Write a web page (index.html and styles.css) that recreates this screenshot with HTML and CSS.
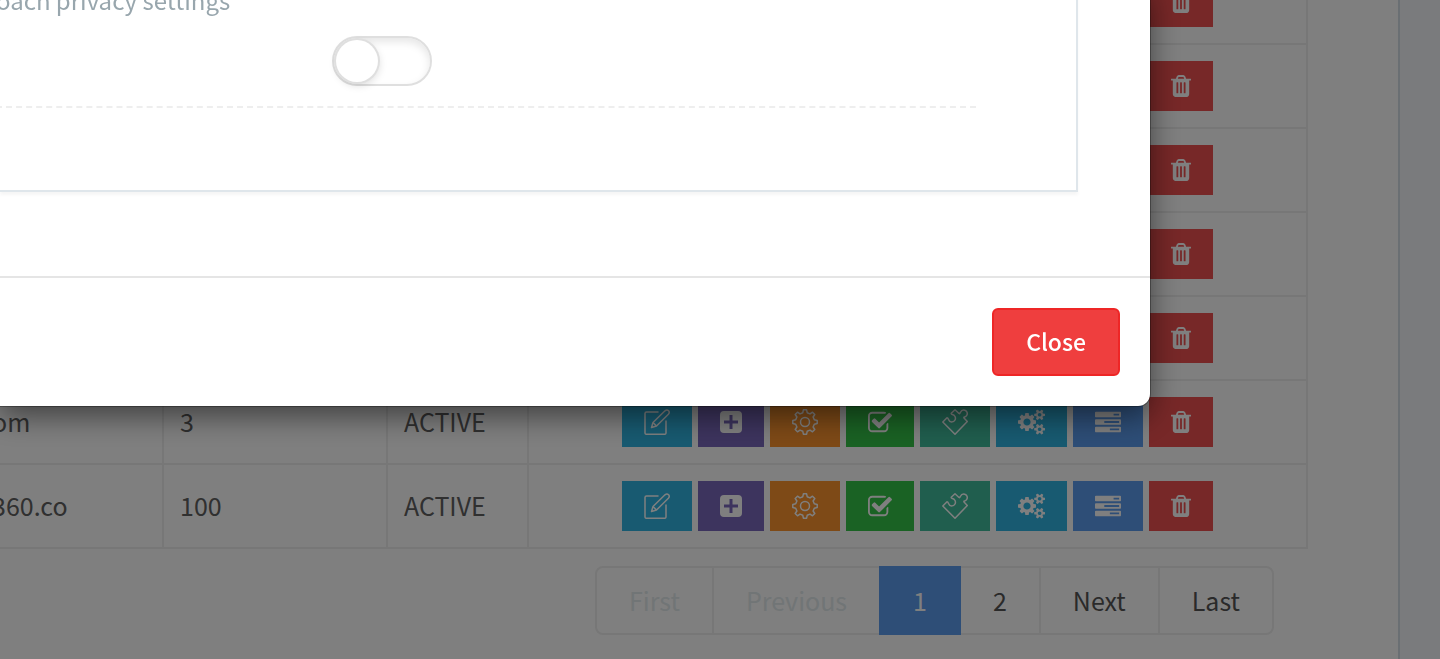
FILE: index.html
```html
<!DOCTYPE html>
<html lang="en">
<head>
  <meta charset="UTF-8">
  <title>Coaches</title>
  <link rel="stylesheet" href="styles.css">
</head>
<body>
  <!-- Icons used in the action buttons -->
  <svg class="hidden">
    <symbol id="edit" viewBox="0 0 26 26">
      <path class="line" d="M14 3H2.500Q1 3 1 4.500V24Q1 25.300 2.500 25.300H20.500Q22 25.300 22 24V12M7.500 18.500L9 13.500L21 1.800Q23 .300 24.600 1.800Q26 3.400 24.400 5.200L12.500 17ZM9 13.500L12.500 17"/>
    </symbol>
    <symbol id="plus" viewBox="0 0 22 22">
      <path d="M4 0H18Q22 0 22 4V18Q22 22 18 22H4Q0 22 0 18V4Q0 0 4 0ZM9.500 4V9.500H4V12.500H9.500V18H12.500V12.500H18V9.500H12.500V4Z"/>
    </symbol>
    <symbol id="gear" viewBox="-13 -13 26 26">
      <path class="line" d="M-2.200-9.300L-1.600-12.200H1.600L2.200-9.300L5-8.100L7.500-9.800L9.800-7.500L8.100-5L9.300-2.200L12.200-1.600V1.600L9.300 2.200L8.100 5L9.800 7.500L7.500 9.800L5 8.100L2.200 9.300L1.600 12.200H-1.600L-2.200 9.300L-5 8.100L-7.500 9.800L-9.800 7.500L-8.100 5L-9.300 2.200L-12.200 1.600V-1.600L-9.300-2.200L-8.100-5L-9.800-7.500L-7.500-9.800L-5-8.100Z"/>
      <circle class="line" r="4.500"/>
    </symbol>
    <symbol id="check" viewBox="64 128 1664 1408">
      <path d="M1472 930v318q0 119-84.500 203.500t-203.500 84.500h-832q-119 0-203.500-84.500t-84.500-203.500v-832q0-119 84.500-203.500t203.500-84.500h832q63 0 117 25 15 7 18 23 3 17-9 29l-49 49q-10 10-23 10-3 0-9-2-23-6-45-6h-832q-66 0-113 47t-47 113v832q0 66 47 113t113 47h832q66 0 113-47t47-113v-254q0-13 9-22l64-64q10-10 23-10 6 0 12 3 20 8 20 29zm231-489l-814 814q-24 24-57 24t-57-24l-430-430q-24-24-24-57t24-57l110-110q24-24 57-24t57 24l263 263 647-647q24-24 57-24t57 24l110 110q24 24 24 57t-24 57z"/>
    </symbol>
    <symbol id="puzzle" viewBox="0 0 26 26">
      <path class="line" d="M.8 13L5 8.800C7 8.800 6 13 9.500 13C13 13 14.300 9.500 12.800 7.200C11.500 5 9 5.800 9.200 4.300L13 .8L17 4.500C18.500 5.500 18 1 21.500 1C25 1 26.500 5 24 7.200C22.500 8.500 21.500 7.700 22 9L25.300 12.500L13 25.300Z"/>
    </symbol>
    <symbol id="cogs" viewBox="0 -128 1920 1792">
      <path d="M896 768q0-106-75-181t-181-75-181 75-75 181 75 181 181 75 181-75 75-181zm768 512q0-52-38-90t-90-38-90 38-38 90q0 53 37.500 90.500t90.500 37.500 90.500-37.500 37.500-90.500zm0-1024q0-52-38-90t-90-38-90 38-38 90q0 53 37.500 90.500t90.500 37.500 90.500-37.500 37.500-90.500zm-384 421v185q0 10-7 19.500t-16 10.500l-155 24q-11 35-32 76 34 48 90 115 7 11 7 20 0 12-7 19-23 30-82.500 89.500t-78.500 59.500q-11 0-21-7l-115-90q-37 19-77 31-11 108-23 155-7 24-30 24h-186q-11 0-20-7.500t-10-17.500l-23-153q-34-10-75-31l-118 89q-7 7-20 7-11 0-21-8-144-133-144-160 0-9 7-19 10-14 41-53t47-61q-23-44-35-82l-152-24q-10-1-17-9.500t-7-19.500v-185q0-10 7-19.500t16-10.500l155-24q11-35 32-76-34-48-90-115-7-11-7-20 0-12 7-20 22-30 82-89t79-59q11 0 21 7l115 90q34-18 77-32 11-108 23-154 7-24 30-24h186q11 0 20 7.500t10 17.500l23 153q34 10 75 31l118-89q8-7 20-7 11 0 21 8 144 133 144 160 0 8-7 19-12 16-42 54t-45 60q23 48 34 82l152 23q10 2 17 10.500t7 19.500zm640 533v140q0 16-149 31-12 27-30 52 51 113 51 138 0 4-4 7-122 71-124 71-8 0-46-47t-52-68q-20 2-30 2t-30-2q-14 21-52 68t-46 47q-2 0-124-71-4-3-4-7 0-25 51-138-18-25-30-52-149-15-149-31v-140q0-16 149-31 13-29 30-52-51-113-51-138 0-4 4-7 4-2 35-20t59-34 30-16q8 0 46 46.500t52 67.500q20-2 30-2t30 2q51-71 92-112l6-2q4 0 124 70 4 3 4 7 0 25-51 138 17 23 30 52 149 15 149 31zm0-1024v140q0 16-149 31-12 27-30 52 51 113 51 138 0 4-4 7-122 71-124 71-8 0-46-47t-52-68q-20 2-30 2t-30-2q-14 21-52 68t-46 47q-2 0-124-71-4-3-4-7 0-25 51-138-18-25-30-52-149-15-149-31v-140q0-16 149-31 13-29 30-52-51-113-51-138 0-4 4-7 4-2 35-20t59-34 30-16q8 0 46 46.500t52 67.500q20-2 30-2t30 2q51-71 92-112l6-2q4 0 124 70 4 3 4 7 0 25-51 138 17 23 30 52 149 15 149 31z"/>
    </symbol>
    <symbol id="tasks" viewBox="0 128 1792 1408">
      <path d="M1024 1408h640v-128h-640v128zm-384-512h1024v-128h-1024v128zm640-512h384v-128h-384v128zm512 832v256q0 26-19 45t-45 19h-1664q-26 0-45-19t-19-45v-256q0-26 19-45t45-19h1664q26 0 45 19t19 45zm0-512v256q0 26-19 45t-45 19h-1664q-26 0-45-19t-19-45v-256q0-26 19-45t45-19h1664q26 0 45 19t19 45zm0-512v256q0 26-19 45t-45 19h-1664q-26 0-45-19t-19-45v-256q0-26 19-45t45-19h1664q26 0 45 19t19 45z"/>
    </symbol>
    <symbol id="trash" viewBox="192 128 1408 1536">
      <path d="M704 1376v-704q0-14-9-23t-23-9h-64q-14 0-23 9t-9 23v704q0 14 9 23t23 9h64q14 0 23-9t9-23zm256 0v-704q0-14-9-23t-23-9h-64q-14 0-23 9t-9 23v704q0 14 9 23t23 9h64q14 0 23-9t9-23zm256 0v-704q0-14-9-23t-23-9h-64q-14 0-23 9t-9 23v704q0 14 9 23t23 9h64q14 0 23-9t9-23zm-544-992h448l-48-117q-7-9-17-11h-317q-10 2-17 11zm928 32v64q0 14-9 23t-23 9h-96v948q0 83-47 143.500t-113 60.500h-832q-66 0-113-58.500t-47-141.500v-952h-96q-14 0-23-9t-9-23v-64q0-14 9-23t23-9h309l70-167q15-37 54-63t79-26h320q40 0 79 26t54 63l70 167h309q14 0 23 9t9 23z"/>
    </symbol>
  </svg>

  <main class="panel">
    <table class="coach-table">
      <colgroup>
        <col class="col-email">
        <col class="col-count">
        <col class="col-status">
        <col>
      </colgroup>
      <tbody id="coachRows"></tbody>
    </table>

    <nav class="pagination" aria-label="Pages">
      <button disabled>First</button>
      <button disabled>Previous</button>
      <button class="active">1</button>
      <button>2</button>
      <button>Next</button>
      <button>Last</button>
    </nav>
  </main>

  <div class="backdrop">
    <div class="modal" role="dialog" aria-label="Settings">
      <div class="modal-body">
        <div class="settings">
          <div class="setting">
            <label for="privacy">oach privacy settings</label>
            <input type="checkbox" class="switch" id="privacy">
          </div>
        </div>
      </div>
      <div class="modal-footer">
        <button class="btn-close">Close</button>
      </div>
    </div>
  </div>

  <script>
    const coaches = [
      ['', '', ''],
      ['', '', ''],
      ['', '', ''],
      ['', '', ''],
      ['', '', ''],
      ['om', '3', 'ACTIVE'],
      ['360.co', '100', 'ACTIVE']
    ];
    const actions = ['edit', 'plus', 'gear', 'check', 'puzzle', 'cogs', 'tasks', 'trash'];

    const buttons = actions.map(name =>
      `<button class="action ${name}" aria-label="${name}"><svg><use href="#${name}"/></svg></button>`
    ).join('');

    document.getElementById('coachRows').innerHTML = coaches.map(coach => `<tr>
      <td class="email">${coach[0]}</td>
      <td>${coach[1]}</td>
      <td>${coach[2]}</td>
      <td><div class="actions">${buttons}</div></td>
    </tr>`).join('');
  </script>
</body>
</html>
```
FILE: styles.css
```css
* {
  box-sizing: border-box;
}

body {
  margin: 0;
  height: 100vh;
  overflow: hidden;
  display: flex;
  background: #f4f6fb;
  color: #606060;
  font-family: "Noto Sans CJK SC", "Open Sans", sans-serif;
  font-size: 25px;
  line-height: 36px;
}

button {
  font: inherit;
  cursor: pointer;
}

.hidden {
  display: none;
}

/* scrolled to the last rows */
.panel {
  flex: 1;
  min-width: 0;
  margin-right: 40px;
  padding: 0 90px 24px 0;
  background: #fff;
  border-right: 2px solid #d5dfe6;
  display: flex;
  flex-direction: column;
  justify-content: flex-end;
}

.coach-table {
  width: calc(100% + 10px);
  margin-left: -10px;
  table-layout: fixed;
  border-collapse: collapse;
}

.col-email { width: 172px; }
.col-count { width: 224px; }
.col-status { width: 141px; }

td {
  border: 2px solid #eee;
  padding: 16px;
  vertical-align: top;
  line-height: 48px;
}

td.email {
  padding-left: 0;
}

.actions {
  display: flex;
  justify-content: center;
  gap: 6px;
}

.action {
  height: 50px;
  padding: 0 22px;
  border: none;
  color: #fff;
  display: flex;
  align-items: center;
}

.action svg {
  width: 26px;
  height: 26px;
  fill: currentColor;
  fill-rule: evenodd;
}

.line {
  fill: none;
  stroke: currentColor;
  stroke-width: 1.5;
  stroke-linejoin: round;
  stroke-linecap: round;
}

.edit { background: #30b5e2; }
.plus { background: #7a68bc; }
.gear { background: #fc942e; }
.check { background: #34c448; }
.puzzle { background: #40bc9c; }
.cogs { background: #30b5e2; }
.tasks { background: #5c9cee; }
.trash { background: #ee5050; }

.action.plus svg { width: 22px; }
.action.check svg { width: 24px; }
.action.cogs svg { width: 27px; }
.action.trash svg { width: 20px; }

.pagination {
  display: flex;
  align-self: flex-end;
  margin: 17px 34px 0 0;
}

.pagination button {
  height: 69px;
  padding: 0 32px 2px;
  background: #fff;
  color: #555;
  border: 2px solid #eee;
}

.pagination button + button {
  margin-left: -2px;
}

.pagination button:first-child {
  border-radius: 8px 0 0 8px;
}

.pagination button:last-child {
  border-radius: 0 8px 8px 0;
}

.pagination button:disabled {
  color: #e2eaec;
}

.pagination .active {
  position: relative;
  z-index: 1;
  background: #5c9cee;
  border-color: #5c9cee;
  color: #fff;
}

.backdrop {
  position: fixed;
  inset: 0;
  z-index: 10;
  padding: 0 290px 253px 0;
  background: rgba(0, 0, 0, 0.5);
  display: flex;
  align-items: flex-end;
}

.modal {
  flex: 1;
  background: #fff;
  border-radius: 0 0 12px 0;
  box-shadow: 0 0 0 1px rgba(0, 0, 0, 0.3), 0 10px 30px rgba(0, 0, 0, 0.5);
}

.modal-body {
  padding: 0 72px 84px 0;
}

.settings {
  padding: 0 100px 82px 0;
  border: solid #dfe6eb;
  border-width: 0 2px 2px 0;
  box-shadow: 0 3px 3px rgba(0, 0, 0, 0.04);
}

.setting {
  display: grid;
  grid-template-columns: 332px 1fr;
  row-gap: 18px;
  padding-bottom: 20px;
  margin-left: -4px;
  border-bottom: 2px dashed #eee;
}

.setting label {
  grid-column: 1 / -1;
  color: #98a6ad;
  font-size: 24px;
}

.switch {
  grid-column: 2;
  appearance: none;
  width: 100px;
  height: 50px;
  margin: 0 4px;
  padding: 2px;
  border: 2px solid #dfdfdf;
  border-radius: 25px;
  box-shadow: inset 0 4px 8px rgba(0, 0, 0, 0.1);
  cursor: pointer;
}

.switch::before {
  content: "";
  display: block;
  width: 42px;
  height: 42px;
  border-radius: 50%;
  background: #fff;
  box-shadow: 0 0 0 2px #dfdfdf, 1px 3px 8px rgba(0, 0, 0, 0.15);
}

.switch:checked {
  background: #64bd63;
}

.switch:checked::before {
  margin-left: auto;
}

.modal-footer {
  display: flex;
  justify-content: flex-end;
  padding: 30px;
  border-top: 2px solid #e5e5e5;
}

.btn-close {
  height: 68px;
  padding: 0 32px 2px;
  background: #ef3e3e;
  color: #fff;
  border: 2px solid #ee2626;
  border-radius: 6px;
  font-size: 23px;
  font-weight: 500;
}
```
